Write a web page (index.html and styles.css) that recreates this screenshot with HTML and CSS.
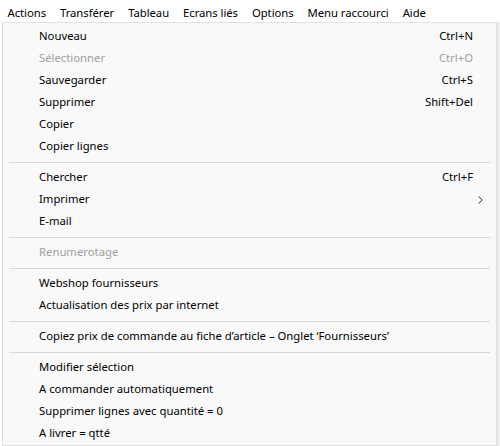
FILE: index.html
```html
<!DOCTYPE html>
<html lang="fr">
<head>
<meta charset="utf-8">
<title>Actions</title>
<link rel="stylesheet" href="styles.css">
</head>
<body>
  <nav class="menubar">
    <span class="menubar-item">Actions</span>
    <span class="menubar-item">Transférer</span>
    <span class="menubar-item">Tableau</span>
    <span class="menubar-item">Ecrans liés</span>
    <span class="menubar-item">Options</span>
    <span class="menubar-item">Menu raccourci</span>
    <span class="menubar-item">Aide</span>
  </nav>

  <div class="workspace">
    <ul class="dropdown">
      <li class="entry"><span class="label">Nouveau</span><span class="shortcut">Ctrl+N</span></li>
      <li class="entry disabled"><span class="label">Sélectionner</span><span class="shortcut">Ctrl+O</span></li>
      <li class="entry"><span class="label">Sauvegarder</span><span class="shortcut">Ctrl+S</span></li>
      <li class="entry"><span class="label">Supprimer</span><span class="shortcut">Shift+Del</span></li>
      <li class="entry"><span class="label">Copier</span></li>
      <li class="entry"><span class="label">Copier lignes</span></li>
      <li class="divider"></li>
      <li class="entry"><span class="label">Chercher</span><span class="shortcut">Ctrl+F</span></li>
      <li class="entry"><span class="label">Imprimer</span><span class="submenu"><svg width="5" height="8" viewBox="0 0 5 8"><path d="M0.6 0.5 L4.3 4 L0.6 7.5" fill="none" stroke="#2b2b2b" stroke-width="1"/></svg></span></li>
      <li class="entry"><span class="label">E-mail</span></li>
      <li class="divider"></li>
      <li class="entry disabled"><span class="label">Renumerotage</span></li>
      <li class="divider"></li>
      <li class="entry"><span class="label">Webshop fournisseurs</span></li>
      <li class="entry"><span class="label">Actualisation des prix par internet</span></li>
      <li class="divider"></li>
      <li class="entry"><span class="label">Copiez prix de commande au fiche d’article – Onglet ‘Fournisseurs’</span></li>
      <li class="divider"></li>
      <li class="entry"><span class="label">Modifier sélection</span></li>
      <li class="entry"><span class="label">A commander automatiquement</span></li>
      <li class="entry"><span class="label">Supprimer lignes avec quantité = 0</span></li>
      <li class="entry"><span class="label">A livrer = qtté</span></li>
    </ul>
    <div class="backdrop"></div>
  </div>
</body>
</html>
```

FILE: styles.css
```css
html, body {
  margin: 0;
  padding: 0;
}

body {
  width: 500px;
  height: 446px;
  overflow: hidden;
  background: #ffffff;
  font-family: "Noto Sans", "Open Sans", sans-serif;
  font-size: 11.3px;
  color: #000000;
}

/* top menu bar */
.menubar {
  display: flex;
  height: 22px;
  box-sizing: border-box;
  padding-top: 2px;
  background: #ffffff;
  white-space: nowrap;
}

.menubar-item {
  line-height: 21px;
  padding: 0 7px;
  letter-spacing: -0.05px;
}

.menubar-item:first-child {
  padding-left: 7.5px;
}

/* area under the bar: open dropdown and the window behind it */
.workspace {
  display: flex;
  padding-left: 2px;
}

.dropdown {
  list-style: none;
  margin: 0;
  width: 495px;
  box-sizing: border-box;
  padding: 2px 0 1px;
  background: #f9f9f9;
  border: 1px solid #dcdcdc;
  border-top-color: #e2e2e2;
}

.entry {
  display: grid;
  grid-template-columns: 1fr auto 23px;
  align-items: center;
  height: 22px;
  line-height: 22px;
  padding-left: 36px;
  white-space: nowrap;
}

.label {
  grid-column: 1;
}

.shortcut {
  grid-column: 2;
  text-align: right;
}

.submenu {
  grid-column: 3;
  display: flex;
  align-items: center;
  padding-left: 5px;
  padding-top: 1px;
}

.disabled {
  color: #a0a0a0;
}

.divider {
  height: 0;
  margin: 5px 6px 3px;
  border-top: 1px solid #d9d9d9;
}

.backdrop {
  flex: 1;
  background: #efefef;
  border-left: 1px solid #e6e6e6;
}
```
